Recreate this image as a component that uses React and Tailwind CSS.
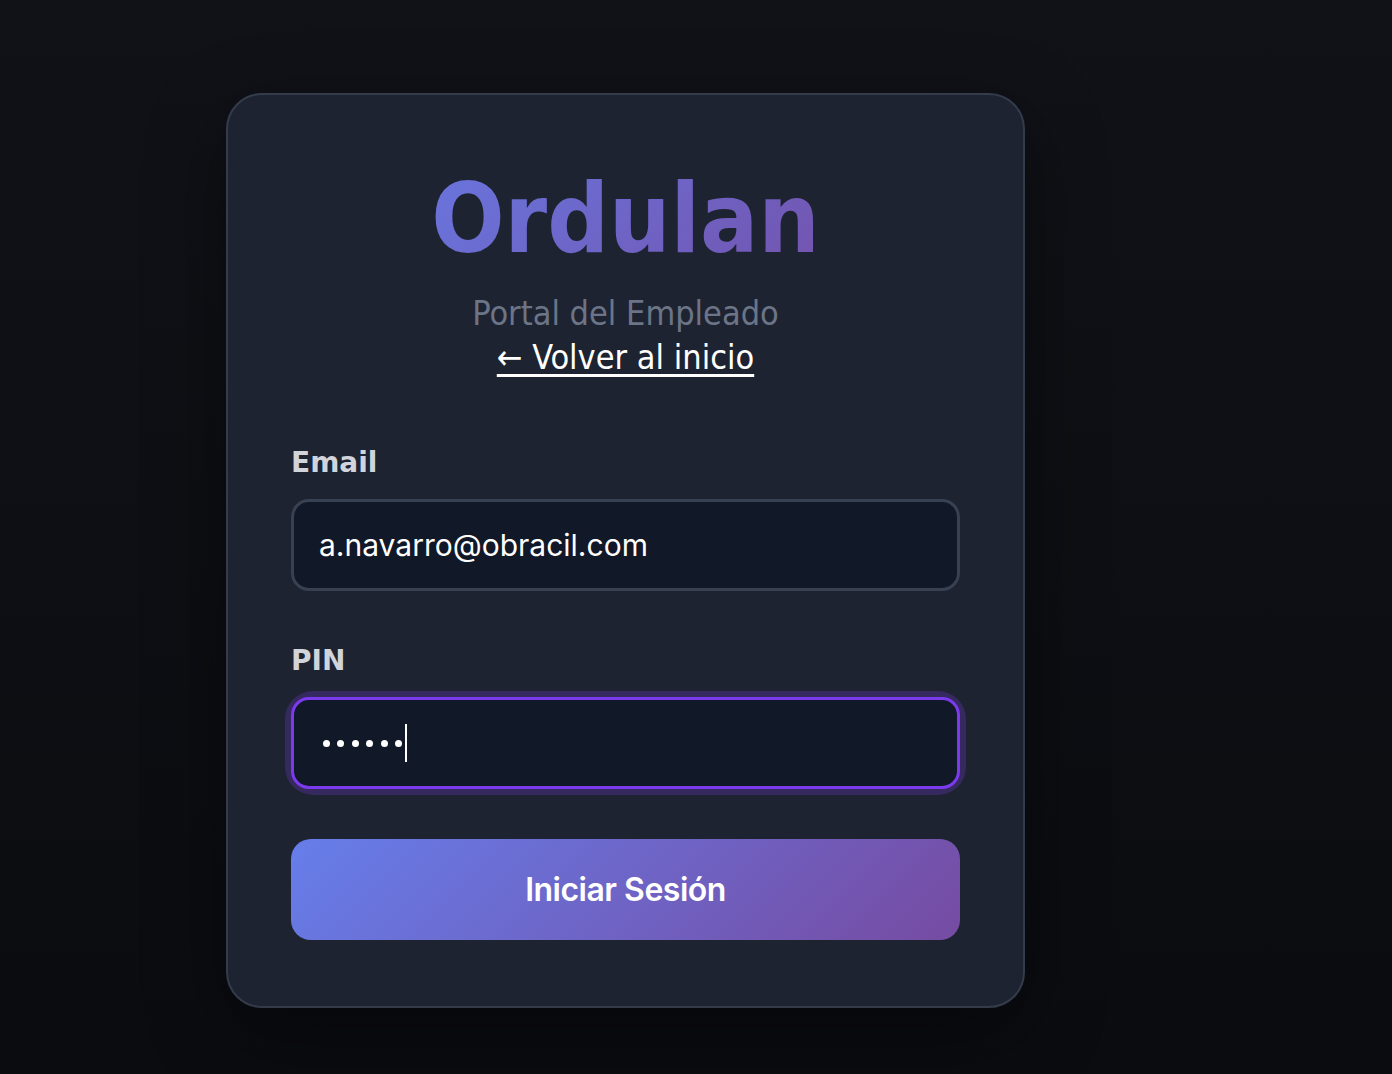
const App = () => {
  const display = "font-['Tahoma','DejaVu_Sans_Condensed','DejaVu_Sans',sans-serif]";
  const label = "block font-['Tahoma','DejaVu_Sans',sans-serif] text-[28px] font-bold leading-[40px] text-[#d1d5db]";

  return (
    <div className="min-h-[1074px] bg-gradient-to-b from-[#111218] to-[#0b0c10] pl-[226px] pt-[93px]">
      <div className="w-[799px] rounded-[36px] border-2 border-[#343c4b] bg-[#1e2331] px-[63px] pt-[68px] pb-[66px] shadow-[0_25px_80px_rgba(0,0,0,0.45)]">
        <div className={`text-center ${display}`}>
          <h1 className="bg-[linear-gradient(135deg,#667eea_0%,#764ba2_100%)] bg-clip-text text-[96px] font-bold leading-[1.18] text-transparent">
            Ordulan
          </h1>
          <p className="mt-[15px] text-[34px] leading-[44px] text-[#6b7587]">Portal del Empleado</p>
          <a href="#" className="text-[34px] leading-[44px] text-white underline underline-offset-[5px]">
            ← Volver al inicio
          </a>
        </div>

        <form className="mt-[64px]">
          <label className={label}>Email</label>
          <input
            type="email"
            defaultValue="a.navarro@obracil.com"
            className="mt-[16px] block h-[92px] w-full rounded-[18px] border-[3px] border-[#374151] bg-[#111827] px-[25px] font-['Inter',sans-serif] text-[30px] text-white outline-none"
          />

          <label className={`mt-[50px] ${label}`}>PIN</label>
          <div className="mt-[16px] rounded-[22px] ring-[6px] ring-[#7c3aed]/25">
            <div className="flex h-[92px] w-full items-center rounded-[18px] border-[3px] border-[#7c3aed] bg-[#111827] pl-[29px] text-white">
              <div className="flex gap-[7.4px]">
                {[0, 1, 2, 3, 4, 5].map((i) => (
                  <span key={i} className="h-[7px] w-[7px] rounded-full bg-white" />
                ))}
              </div>
              <span className="ml-[3px] h-[38px] w-[2px] bg-white" />
            </div>
          </div>

          <button
            type="button"
            className="mt-[50px] block h-[101px] w-full rounded-[20px] bg-[linear-gradient(135deg,#667eea_0%,#764ba2_100%)] font-['Inter',sans-serif] text-[32px] font-semibold tracking-[-0.5px] text-white"
          >
            Iniciar Sesión
          </button>
        </form>
      </div>
    </div>
  );
};

export default App;
